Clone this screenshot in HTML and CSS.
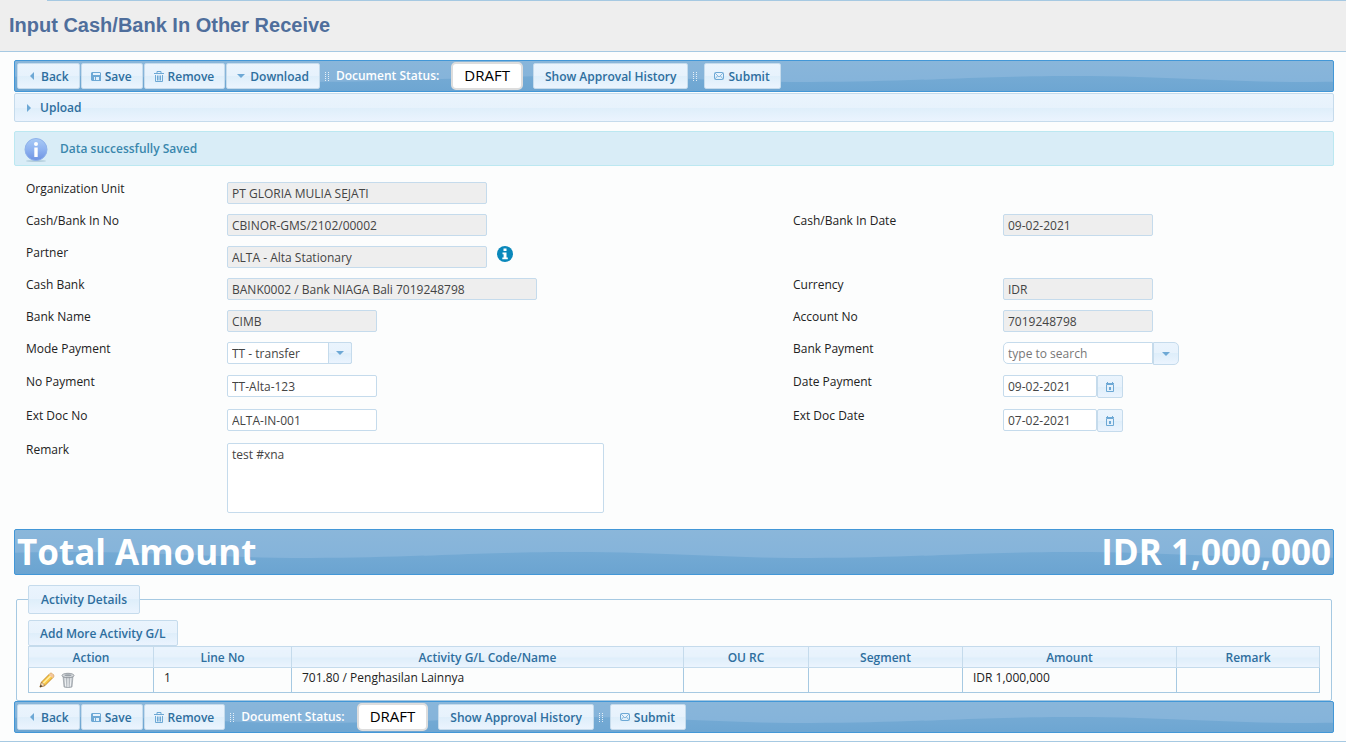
FILE: index.html
```html
<!DOCTYPE html>
<html lang="en">
<head>
    <meta charset="UTF-8">
    <meta name="viewport" content="width=device-width, initial-scale=1.0">
    <title>Input Cash/Bank In Other Receive</title>
    <link rel="stylesheet" href="styles.css">
</head>
<body>
    <!-- icon set -->
    <svg class="hidden" aria-hidden="true">
        <symbol id="icon-left" viewBox="0 0 16 16"><path d="M10 4v8L6 8z" fill="currentColor"/></symbol>
        <symbol id="icon-right" viewBox="0 0 16 16"><path d="M6 4v8L10 8z" fill="currentColor"/></symbol>
        <symbol id="icon-down" viewBox="0 0 16 16"><path d="M4 6h8L8 10z" fill="currentColor"/></symbol>
        <symbol id="icon-disk" viewBox="0 0 16 16"><path fill-rule="evenodd" d="M4 4h8l1 1v8H4l-1-1V5zM5 5v2h7V5zM6 9v3h1V9zM8 9v3h3V9z" fill="currentColor"/></symbol>
        <symbol id="icon-trash" viewBox="0 0 16 16"><path d="M6 5V3.500h4V5M3 5.500h10M4.500 7v6.500h7V7M6.500 7.500v5M8 7.500v5M9.500 7.500v5" fill="none" stroke="currentColor"/></symbol>
        <symbol id="icon-mail" viewBox="0 0 16 16"><rect x="3.500" y="4.500" width="9" height="7" rx="1" fill="none" stroke="currentColor"/><path d="M4 5l4 4 4-4M4 11l2.500-3M12 11L9.500 8" fill="none" stroke="currentColor" stroke-width=".8"/></symbol>
        <symbol id="icon-calendar" viewBox="0 0 16 16"><path d="M4.500 5.500h7v7h-7zM4 4.500h8M5.500 3v2M10.500 3v2" fill="none" stroke="currentColor"/><path d="M7 8h2v3H7z" fill="currentColor"/></symbol>
        <symbol id="icon-grip" viewBox="0 0 4 10"><path d="M.5 0v10M3.500 0v10" stroke="#fff" stroke-dasharray="1 1" opacity=".8"/></symbol>
    </svg>

    <header class="page-header">
        <h1>Input Cash/Bank In Other Receive</h1>
    </header>

    <main class="content">
        <div class="toolbar">
            <button type="button"><svg class="icon"><use href="#icon-left"/></svg>Back</button>
            <button type="button"><svg class="icon"><use href="#icon-disk"/></svg>Save</button>
            <button type="button"><svg class="icon"><use href="#icon-trash"/></svg>Remove</button>
            <button type="button"><svg class="icon"><use href="#icon-down"/></svg>Download</button>
            <svg class="grip"><use href="#icon-grip"/></svg>
            <span class="status-label">Document Status:</span>
            <span class="status">DRAFT</span>
            <button type="button" class="text-only">Show Approval History</button>
            <svg class="grip"><use href="#icon-grip"/></svg>
            <button type="button"><svg class="icon"><use href="#icon-mail"/></svg>Submit</button>
        </div>

        <button type="button" class="upload"><svg class="icon"><use href="#icon-right"/></svg>Upload</button>

        <div class="message">
            <svg class="message-icon" viewBox="0 0 24 24">
                <defs>
                    <linearGradient id="ball" x1="0" y1="0" x2="0" y2="1">
                        <stop offset="0" stop-color="#a9cbf6"/>
                        <stop offset=".5" stop-color="#8eb2f0"/>
                        <stop offset="1" stop-color="#6f93e2"/>
                    </linearGradient>
                </defs>
                <ellipse cx="12" cy="23" rx="10" ry="1" fill="#b5cfdd"/>
                <circle cx="12" cy="11.500" r="11" fill="url(#ball)" stroke="#8fb2ea"/>
                <circle cx="12" cy="6" r="2" fill="#fff"/>
                <path d="M10.300 9.500h3.400v9.500h-3.400z" fill="#fff"/>
            </svg>
            <span>Data successfully Saved</span>
        </div>

        <form class="form">
            <label for="org-unit">Organization Unit</label>
            <div class="field full"><input type="text" id="org-unit" class="w-260" value="PT GLORIA MULIA SEJATI" readonly></div>

            <label for="doc-no">Cash/Bank In No</label>
            <div class="field"><input type="text" id="doc-no" class="w-260" value="CBINOR-GMS/2102/00002" readonly></div>
            <label for="doc-date">Cash/Bank In Date</label>
            <div class="field"><input type="text" id="doc-date" class="w-150" value="09-02-2021" readonly></div>

            <label for="partner">Partner</label>
            <div class="field full">
                <input type="text" id="partner" class="w-260" value="ALTA - Alta Stationary" readonly>
                <a href="#" class="info-link" aria-label="Partner info">
                    <svg viewBox="0 0 16 16"><circle cx="8" cy="8" r="8" fill="#0a88bb"/><path d="M6.500 2.500h3v2.500h-3zM5.500 6.500h4v5h1.300v1.700H5.300v-1.700h1.300V8.200H5.500z" fill="#fff"/></svg>
                </a>
            </div>

            <label for="cash-bank">Cash Bank</label>
            <div class="field"><input type="text" id="cash-bank" class="w-310" value="BANK0002 / Bank NIAGA Bali 7019248798" readonly></div>
            <label for="currency">Currency</label>
            <div class="field"><input type="text" id="currency" class="w-150" value="IDR" readonly></div>

            <label for="bank-name">Bank Name</label>
            <div class="field"><input type="text" id="bank-name" class="w-150" value="CIMB" readonly></div>
            <label for="account-no">Account No</label>
            <div class="field"><input type="text" id="account-no" class="w-150" value="7019248798" readonly></div>

            <label for="mode-payment">Mode Payment</label>
            <div class="field">
                <div class="select">
                    <select id="mode-payment">
                        <option>TT - transfer</option>
                    </select>
                    <span class="trigger"><svg class="icon"><use href="#icon-down"/></svg></span>
                </div>
            </div>
            <label for="bank-payment">Bank Payment</label>
            <div class="field search">
                <input type="text" id="bank-payment" class="w-150" placeholder="type to search">
                <button type="button" class="addon" aria-label="Show banks"><svg class="icon"><use href="#icon-down"/></svg></button>
            </div>

            <label for="no-payment">No Payment</label>
            <div class="field tall"><input type="text" id="no-payment" class="w-150" value="TT-Alta-123"></div>
            <label for="date-payment">Date Payment</label>
            <div class="field tall">
                <input type="text" id="date-payment" class="w-94" value="09-02-2021">
                <button type="button" class="addon" aria-label="Pick date"><svg class="icon"><use href="#icon-calendar"/></svg></button>
            </div>

            <label for="ext-doc-no">Ext Doc No</label>
            <div class="field tall"><input type="text" id="ext-doc-no" class="w-150" value="ALTA-IN-001"></div>
            <label for="ext-doc-date">Ext Doc Date</label>
            <div class="field tall">
                <input type="text" id="ext-doc-date" class="w-94" value="07-02-2021">
                <button type="button" class="addon" aria-label="Pick date"><svg class="icon"><use href="#icon-calendar"/></svg></button>
            </div>

            <label for="remark">Remark</label>
            <div class="field full"><textarea id="remark">test #xna</textarea></div>
        </form>

        <div class="total">
            <span>Total Amount</span>
            <span>IDR 1,000,000</span>
        </div>

        <fieldset class="details">
            <legend>Activity Details</legend>
            <button type="button" class="text-only">Add More Activity G/L</button>
            <table>
                <colgroup>
                    <col class="col-action">
                    <col class="col-line">
                    <col class="col-code">
                    <col class="col-ou">
                    <col class="col-segment">
                    <col class="col-amount">
                    <col class="col-remark">
                </colgroup>
                <thead>
                    <tr>
                        <th>Action</th>
                        <th>Line No</th>
                        <th>Activity G/L Code/Name</th>
                        <th>OU RC</th>
                        <th>Segment</th>
                        <th>Amount</th>
                        <th>Remark</th>
                    </tr>
                </thead>
                <tbody>
                    <tr>
                        <td>
                            <div class="actions">
                                <a href="#" aria-label="Edit">
                                    <svg viewBox="0 0 16 16">
                                        <path d="M1 15l1.500-5L11 1.500q1-.8 2 0l1.500 1.500q.8 1 0 2L6 13.500z" fill="#f9c846" stroke="#b87a1e" stroke-width=".8"/>
                                        <path d="M4 11.500L12.500 3" stroke="#fff0a8" stroke-width="1.500"/>
                                        <path d="M2.500 10L6 13.500 1 15z" fill="#f5dfc0" stroke="#9a6a30" stroke-width=".6"/>
                                        <path d="M1.800 12.800l1.500 1.500L.8 15.200z" fill="#333"/>
                                        <path d="M11 1.500q1-.8 2 0l1.500 1.500q.8 1 0 2l-1 1-3.500-3.500z" fill="#f3c7a0"/>
                                    </svg>
                                </a>
                                <a href="#" aria-label="Delete">
                                    <svg viewBox="0 0 16 16">
                                        <path d="M3 4l1 11q4 1.500 8 0l1-11z" fill="#b4bac0" stroke="#8d949b" stroke-width=".6"/>
                                        <path d="M5 5.500l.7 9M8 5.500v9.500M11 5.500l-.7 9" stroke="#edf0f2" stroke-width="1.200"/>
                                        <ellipse cx="8" cy="3.500" rx="6" ry="2.200" fill="#d8dcdf" stroke="#858c93" stroke-width=".8"/>
                                        <ellipse cx="8" cy="3.200" rx="3.500" ry="1" fill="#9aa2a9"/>
                                    </svg>
                                </a>
                            </div>
                        </td>
                        <td>1</td>
                        <td>701.80 / Penghasilan Lainnya</td>
                        <td></td>
                        <td></td>
                        <td>IDR 1,000,000</td>
                        <td></td>
                    </tr>
                </tbody>
            </table>
        </fieldset>

        <div class="toolbar">
            <button type="button"><svg class="icon"><use href="#icon-left"/></svg>Back</button>
            <button type="button"><svg class="icon"><use href="#icon-disk"/></svg>Save</button>
            <button type="button"><svg class="icon"><use href="#icon-trash"/></svg>Remove</button>
            <svg class="grip"><use href="#icon-grip"/></svg>
            <span class="status-label">Document Status:</span>
            <span class="status">DRAFT</span>
            <button type="button" class="text-only">Show Approval History</button>
            <svg class="grip"><use href="#icon-grip"/></svg>
            <button type="button"><svg class="icon"><use href="#icon-mail"/></svg>Submit</button>
        </div>
    </main>
</body>
</html>
```
FILE: styles.css
```css
* {
    box-sizing: border-box;
}

body {
    margin: 0;
    background-color: #fcfdfd;
    color: #222;
    font-family: "Lucida Grande", "Open Sans", "Noto Sans", sans-serif;
    font-size: 12px;
    line-height: 12px;
}

.hidden {
    position: absolute;
    width: 0;
    height: 0;
}

.page-header {
    height: 52px;
    padding: 0 9px;
    border-bottom: 1px solid #a6c9e2;
    background: linear-gradient(#a6c9e2, #a6c9e2) 47px 0 / 100% 1px no-repeat #eee;
}

h1 {
    margin: 0;
    color: #4f6e9c;
    font-family: "Liberation Sans", Arial, sans-serif;
    font-size: 20px;
    line-height: 50px;
}

.content {
    padding: 8px 12px 8px 14px;
    border-bottom: 1px solid #a6c9e2;
}

input, select, textarea, button {
    margin: 0;
    font-family: inherit;
    font-size: 12px;
}

/* Glass surfaces */
button, legend, th, .trigger {
    border: 1px solid #c5dbec;
    background: linear-gradient(#eaf4fd 0%, #e7f2fc 50%, #deeefa 50%, #ebf4fe 100%);
    color: #2e6e9e;
    font-weight: 600;
}

button {
    display: inline-flex;
    align-items: center;
    height: 26px;
    padding: 0 10px 0 6px;
    border-radius: 2px;
    white-space: nowrap;
    cursor: pointer;
}

button.text-only {
    padding: 0 11px;
}

.icon {
    flex: none;
    width: 16px;
    height: 16px;
    margin-right: 1px;
    color: #6da8d5;
}

/* Gloss wave bars */
.toolbar, .total {
    border: 1px solid #4297d7;
    border-radius: 2px;
    background-color: #6fa7d2;
    background-image: url("data:image/svg+xml,%3Csvg xmlns='http://www.w3.org/2000/svg' width='500' height='100'%3E%3ClinearGradient id='a' x2='0' y2='1'%3E%3Cstop offset='.25' stop-color='%238bb7da'/%3E%3Cstop offset='.6' stop-color='%2384b3da'/%3E%3C/linearGradient%3E%3ClinearGradient id='b' gradientUnits='userSpaceOnUse' x1='0' y1='50' x2='0' y2='72'%3E%3Cstop stop-color='%2374aad4'/%3E%3Cstop offset='1' stop-color='%236ba4d1'/%3E%3C/linearGradient%3E%3Cpath fill='url(%23a)' d='M0 0h500v100H0z'/%3E%3Cpath fill='url(%23b)' d='M-114 56C-10 56 50 50 149 50S290 56 386 56 550 50 649 50V100H-114z'/%3E%3C/svg%3E");
    background-position: 50% 50%;
    color: #fff;
    font-weight: bold;
}

.toolbar {
    display: flex;
    align-items: center;
    gap: 1px;
    height: 32px;
    padding: 0 2px;
}

.grip {
    width: 4px;
    height: 10px;
    margin: 2px 6px 0 4px;
}

.status-label {
    font-weight: 600;
}

.status {
    height: 28px;
    margin: 0 9px 0 11px;
    padding: 0 11px;
    border: 2px solid #ddd;
    border-radius: 5px;
    background-color: #fff;
    color: #000;
    font-size: 15px;
    font-weight: 500;
    line-height: 22px;
}

button.upload {
    display: flex;
    width: 100%;
    height: 29px;
    margin-top: 1px;
    padding: 0 6px;
}

.upload .icon {
    margin-right: 3px;
}

.message {
    display: flex;
    align-items: center;
    height: 35px;
    margin-top: 9px;
    padding: 0 9px;
    border: 1px solid #bce8f1;
    border-radius: 2px;
    background-color: #d9edf7;
    color: #3a87ad;
    font-weight: 600;
}

.message-icon {
    width: 24px;
    height: 24px;
    margin: 2px 12px 0 0;
}

/* Form */
.form {
    display: grid;
    grid-template-columns: 201fr 566fr 210fr 331fr;
    row-gap: 10px;
    margin-top: 16px;
    padding-left: 12px;
}

.form label {
    line-height: 14px;
}

.field {
    display: flex;
    align-items: flex-start;
}

.field.full {
    grid-column: 2 / -1;
}

.field.tall {
    min-height: 24px;
}

input, select, textarea {
    height: 22px;
    padding: 0 4px;
    border: 1px solid #c5dbec;
    border-radius: 2px;
    background-color: #fff;
    color: #444;
}

input[readonly] {
    background-color: #eee;
}

input::placeholder {
    color: #777;
}

textarea {
    display: block;
    width: 377px;
    height: 70px;
    padding: 4px;
    line-height: 14px;
    resize: none;
}

.w-94 { width: 94px; }
.w-150 { width: 150px; }
.w-260 { width: 260px; }
.w-310 { width: 310px; }

.info-link {
    width: 16px;
    height: 16px;
    margin-left: 10px;
}

.select {
    position: relative;
    width: 125px;
}

.select select {
    width: 100%;
    appearance: none;
}

.trigger {
    position: absolute;
    top: 0;
    right: 0;
    display: flex;
    align-items: center;
    justify-content: center;
    width: 24px;
    height: 22px;
    border-radius: 0 2px 2px 0;
    pointer-events: none;
}

.trigger .icon, .addon .icon {
    margin: 0;
}

button.addon {
    justify-content: center;
    width: 26px;
    height: 23px;
    padding: 0;
}

.search input {
    border-radius: 5px 0 0 5px;
}

.search .addon {
    border-radius: 0 5px 5px 0;
}

/* Total */
.total {
    display: flex;
    justify-content: space-between;
    height: 46px;
    margin-top: 16px;
    padding: 0 2px;
    font-size: 35px;
    line-height: 44px;
}

/* Activity details */
.details {
    min-width: 0;
    margin: 10px 2px 0 2px;
    padding: 6px 12px 7px 11px;
    border: 1px solid #a6c9e2;
    border-radius: 2px;
}

legend {
    height: 29px;
    padding: 0 12px;
    border-radius: 2px;
    line-height: 27px;
}

.details button {
    display: flex;
}

table {
    width: 100%;
    border-collapse: collapse;
    table-layout: fixed;
}

th {
    height: 21px;
    padding: 1px 0 0 0;
}

td {
    height: 25px;
    padding: 4px 10px;
    border: 1px solid #a6c9e2;
    background-color: #fcfdfd;
    vertical-align: top;
}

.col-action { width: 125px; }
.col-line { width: 138px; }
.col-code { width: 392px; }
.col-ou { width: 125px; }
.col-segment { width: 154px; }
.col-amount { width: 214px; }
.col-remark { width: 143px; }

.actions {
    display: flex;
    gap: 5px;
}

.actions a, .info-link {
    display: block;
}

.actions svg, .info-link svg {
    display: block;
    width: 16px;
    height: 16px;
}
```
